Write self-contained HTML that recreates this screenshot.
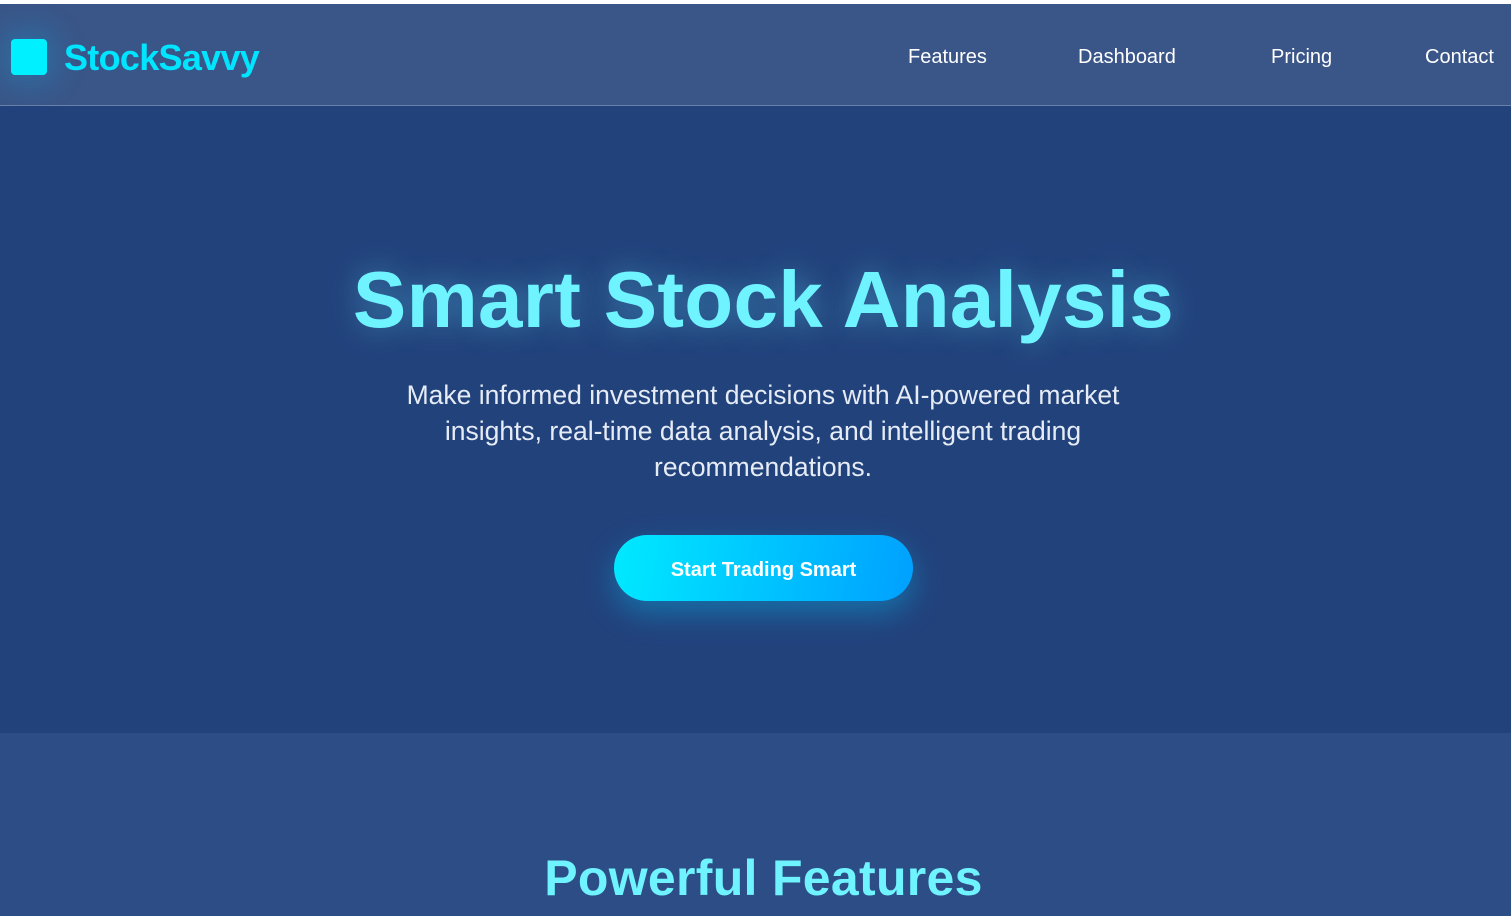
<!DOCTYPE html>
<html><head><style>
*{margin:0;padding:0;box-sizing:border-box}
body{width:1511px;height:916px;overflow:hidden;background:#22427c;font-family:"Liberation Sans",sans-serif;position:relative}
.top{position:absolute;left:0;top:0;width:1511px;height:4px;background:#fff}
nav{position:absolute;left:0;top:4px;width:1511px;height:102px;background:#3a5588;border-bottom:1px solid #6a80a8}
.logo{position:absolute;left:11px;top:35px;width:36px;height:36px;background:#00f0ff;border-radius:4px;box-shadow:0 0 30px 10px rgba(0,200,255,.2)}
.brand{position:absolute;left:64px;top:33px;font-size:36px;font-weight:bold;color:#00e5ff;letter-spacing:-0.7px}
.nav a{position:absolute;top:42px;color:#fff;font-size:20px;text-decoration:none}
.hero{position:absolute;left:0;top:106px;width:1511px;height:627px;background:#22427c}
h1{position:absolute;top:254px;left:8px;width:1511px;text-align:center;font-size:80px;font-weight:bold;color:#6ff3ff;text-shadow:0 0 30px rgba(100,230,255,.4);letter-spacing:0.3px}
p.sub{position:absolute;top:377px;left:370px;width:786px;text-align:center;font-size:26.5px;line-height:36px;color:#e6ecf6}
.btn{position:absolute;left:614px;top:535px;width:299px;height:66px;border-radius:33px;background:linear-gradient(100deg,#00eaff,#00a0ff);color:#fff;font-weight:bold;font-size:20px;text-align:center;line-height:70px;box-shadow:0 12px 30px rgba(0,200,255,.35)}
.feat{position:absolute;left:0;top:733px;width:1511px;height:183px;background:#2d4d86}
h2{position:absolute;top:849px;left:8px;width:1511px;text-align:center;font-size:50px;font-weight:bold;color:#6ff3ff;letter-spacing:0.3px}
</style></head><body>
<div class="top"></div>
<div class="hero"></div>
<nav><div class="logo"></div><div class="brand">StockSavvy</div>
<div class="nav"><a style="left:908px">Features</a><a style="left:1078px">Dashboard</a><a style="left:1271px">Pricing</a><a style="left:1425px">Contact</a></div></nav>
<h1>Smart Stock Analysis</h1>
<p class="sub">Make informed investment decisions with AI-powered market insights, real-time data analysis, and intelligent trading recommendations.</p>
<div class="btn">Start Trading Smart</div>
<div class="feat"></div>
<h2>Powerful Features</h2>
</body></html>
